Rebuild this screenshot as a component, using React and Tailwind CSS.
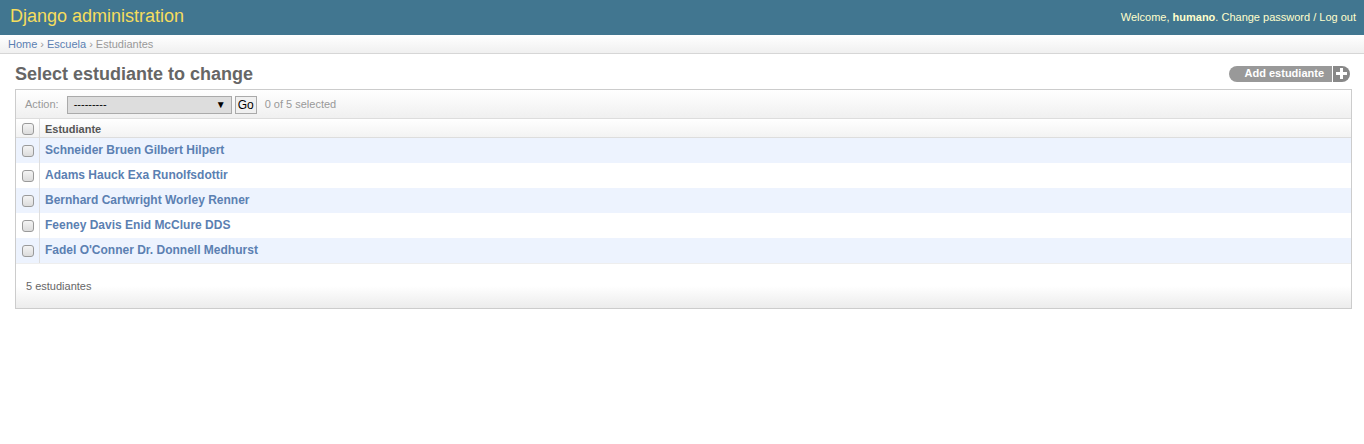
import React from "react";

const rows = [
  "Schneider Bruen Gilbert Hilpert",
  "Adams Hauck Exa Runolfsdottir",
  "Bernhard Cartwright Worley Renner",
  "Feeney Davis Enid McClure DDS",
  "Fadel O'Conner Dr. Donnell Medhurst",
];

function Box() {
  return (
    <span className="block w-[12px] h-[12px] rounded-[3px] border border-[#9a9a9a] bg-gradient-to-b from-[#f4f4f4] to-[#dcdcdc]" />
  );
}

export default function App() {
  return (
    <div className="min-h-[444px] bg-white text-[11px] text-[#333]" style={{ fontFamily: '"Liberation Sans", Arial, sans-serif' }}>
      <div className="h-[35px] bg-[#417690] flex items-center justify-between pl-[10px] pr-[8px]">
        <div className="text-[18px] text-[#f5dd5d] leading-none pb-[3px]">Django administration</div>
        <div className="text-[11px] text-[#ffc] leading-none pb-[1px]">
          Welcome, <span className="font-bold">humano</span>. Change password / Log out
        </div>
      </div>
      <div className="h-[19px] border-b border-[#d6d6d6] bg-gradient-to-b from-white to-[#f0f0f0] pl-[8px] flex items-center text-[11px]">
        <span className="text-[#5b80b2]">Home</span>
        <span className="text-[#999] px-[3px]">›</span>
        <span className="text-[#5b80b2]">Escuela</span>
        <span className="text-[#999] px-[3px]">›</span>
        <span className="text-[#999]">Estudiantes</span>
      </div>
      <div className="pl-[15px] pr-[12px] pt-[8px]">
        <div className="h-[24px] mb-[3px] flex items-center justify-between">
          <h1 className="text-[18px] font-bold text-[#666] leading-none pb-[1px]">Select estudiante to change</h1>
          <div className="flex items-stretch h-[16px] mr-[2px] mb-[1px]">
            <span className="bg-[#999] text-white font-bold text-[11px] rounded-l-full pl-[16px] pr-[8px] flex items-center">Add estudiante</span>
            <span className="w-[1px] bg-white" />
            <span className="bg-[#888] rounded-r-full w-[17px] flex items-center justify-center">
              <svg width="11" height="11" viewBox="0 0 11 11">
                <rect x="4" y="0" width="3" height="11" fill="white" />
                <rect x="0" y="4" width="11" height="3" fill="white" />
              </svg>
            </span>
          </div>
        </div>
        <div className="border border-[#ccc]">
          <div className="h-[29px] border-b border-[#ddd] bg-gradient-to-b from-white to-[#f0f0f0] flex items-center pl-[9px] pt-[1px]">
            <span className="text-[#999] mr-[8px]">Action:</span>
            <div className="w-[165px] h-[18px] bg-[#ddd] border border-[#aaa] flex items-center justify-between pl-[6px] pr-[5px] text-black text-[11px]">
              <span>---------</span>
              <span className="text-[10px]">▼</span>
            </div>
            <div className="ml-[3px] h-[18px] w-[22px] border border-[#aaa] bg-[#f0f0f0] flex items-center justify-center text-black text-[12px]">Go</div>
            <span className="ml-[8px] text-[#999]">0 of 5 selected</span>
          </div>
          <div className="h-[19px] border-b border-[#ddd] bg-gradient-to-b from-white to-[#f3f3f3] flex items-stretch">
            <div className="w-[24px] border-r border-[#ddd] flex items-center justify-center pt-[1px]">
              <Box />
            </div>
            <div className="pl-[5px] flex items-center font-bold text-[#555] pt-[2px]">Estudiante</div>
          </div>
          {rows.map((r, i) => (
            <div key={r} className={"h-[25px] flex items-stretch " + (i % 2 === 0 ? "bg-[#edf3fe]" : "bg-white")}>
              <div className="w-[24px] border-r border-[#ddd] flex items-center justify-center pt-[1px]">
                <Box />
              </div>
              <div className="pl-[5px] flex items-center font-bold text-[12px] text-[#5b80b2] pb-[1px]">{r}</div>
            </div>
          ))}
          <div className="h-[45px] border-t border-[#eee] bg-gradient-to-b from-white from-50% to-[#ececec] flex items-center pl-[10px] text-[#666]">
            5 estudiantes
          </div>
        </div>
      </div>
    </div>
  );
}
